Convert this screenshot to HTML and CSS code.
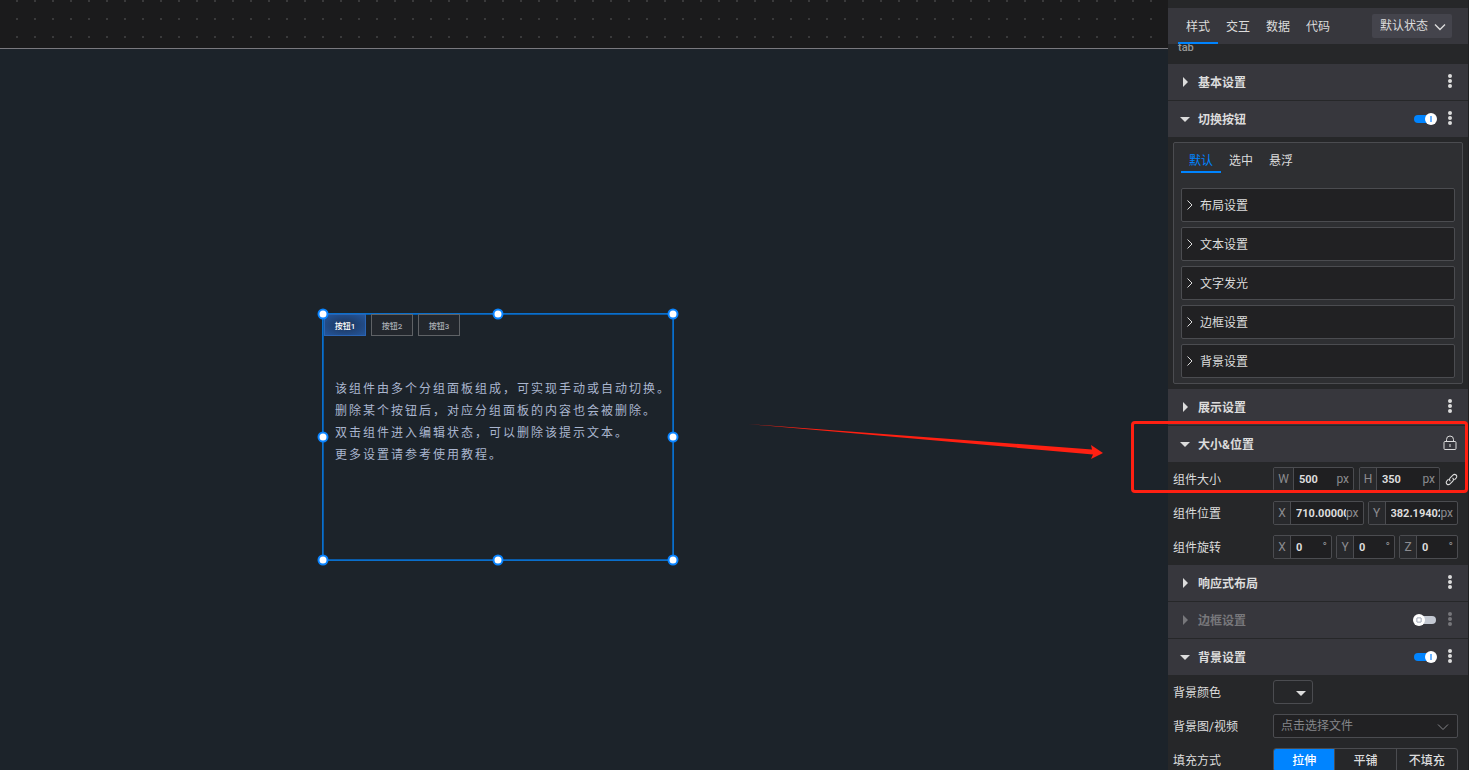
FILE: index.html
```html
<!DOCTYPE html>
<html lang="zh-CN">
<head>
  <meta charset="UTF-8">
  <meta name="viewport" content="width=device-width, initial-scale=1.0">
  <title>编辑器</title>
  <link rel="stylesheet" href="styles.css">
</head>
<body>

  <div class="editor">
    <!-- Canvas -->
    <main class="workspace">
      <div class="grid-strip"></div>
      <div class="canvas"></div>

      <div class="widget">
        <div class="widget-tabs">
          <button class="widget-tab active">按钮1</button>
          <button class="widget-tab">按钮2</button>
          <button class="widget-tab">按钮3</button>
        </div>
        <p class="widget-text">该组件由多个分组面板组成，可实现手动或自动切换。<br>删除某个按钮后，对应分组面板的内容也会被删除。<br>双击组件进入编辑状态，可以删除该提示文本。<br>更多设置请参考使用教程。</p>
        <i class="handle top left"></i>
        <i class="handle top center"></i>
        <i class="handle top right"></i>
        <i class="handle middle left"></i>
        <i class="handle middle right"></i>
        <i class="handle bottom left"></i>
        <i class="handle bottom center"></i>
        <i class="handle bottom right"></i>
      </div>

      <svg class="arrow" width="356" height="38" viewBox="0 0 356 38">
        <path d="M0 1 L344 26.500 L343 22 L355 30 L343 36 L345 31.500 Z" fill="#ff2012"/>
      </svg>
    </main>

    <!-- Settings panel -->
    <aside class="panel">
      <header class="panel-header">
        <nav class="tabs">
          <button class="tab active">样式</button>
          <button class="tab">交互</button>
          <button class="tab">数据</button>
          <button class="tab">代码</button>
        </nav>
        <div class="state-box">
          <select class="state-select" aria-label="状态">
            <option>默认状态</option>
          </select>
          <svg class="chevron" width="12" height="8" viewBox="0 0 12 8"><path d="M1 1.500 6 6.500l5-5" stroke-width="1.400"/></svg>
        </div>
      </header>

      <div class="panel-body">
        <div class="component-name">tab</div>

        <section class="section">
          <h3 class="section-title"><i class="caret"></i>基本设置<span class="actions"><button class="more" aria-label="更多"><i></i><i></i><i></i></button></span></h3>
        </section>

        <section class="section">
          <h3 class="section-title"><i class="caret open"></i>切换按钮<span class="actions"><input class="switch" type="checkbox" aria-label="切换按钮" checked><button class="more" aria-label="更多"><i></i><i></i><i></i></button></span></h3>
          <div class="card">
            <div class="tabs card-tabs">
              <button class="tab active">默认</button>
              <button class="tab">选中</button>
              <button class="tab">悬浮</button>
            </div>
            <div class="fold-list">
              <button class="fold"><svg width="6" height="10" viewBox="0 0 6 10"><path d="M.5.500 5 5 .5 9.500"/></svg>布局设置</button>
              <button class="fold"><svg width="6" height="10" viewBox="0 0 6 10"><path d="M.5.500 5 5 .5 9.500"/></svg>文本设置</button>
              <button class="fold"><svg width="6" height="10" viewBox="0 0 6 10"><path d="M.5.500 5 5 .5 9.500"/></svg>文字发光</button>
              <button class="fold"><svg width="6" height="10" viewBox="0 0 6 10"><path d="M.5.500 5 5 .5 9.500"/></svg>边框设置</button>
              <button class="fold"><svg width="6" height="10" viewBox="0 0 6 10"><path d="M.5.500 5 5 .5 9.500"/></svg>背景设置</button>
            </div>
          </div>
        </section>

        <section class="section">
          <h3 class="section-title"><i class="caret"></i>展示设置<span class="actions"><button class="more" aria-label="更多"><i></i><i></i><i></i></button></span></h3>
        </section>

        <section class="section marked">
          <h3 class="section-title"><i class="caret open"></i>大小&amp;位置<span class="actions">
            <button class="icon-button" aria-label="锁定"><svg width="14" height="16" viewBox="0 0 14 16"><rect x="1" y="6.500" width="12" height="8" rx="1"/><path d="M3.500 6.500V4.500a3.500 3.500 0 0 1 7 0v2M7 9v3"/></svg></button></span></h3>
          <div class="row">
            <span class="row-label">组件大小</span>
            <div class="fields size-fields">
              <label class="field"><span class="prefix wide">W</span><input type="text" value="500"><span class="unit">px</span></label>
              <label class="field"><span class="prefix">H</span><input type="text" value="350"><span class="unit">px</span></label>
              <button class="icon-button" aria-label="锁定比例"><svg width="13" height="13" viewBox="0 0 12 12"><path d="M5 7.500C3.800 6.500 4 5.300 4.800 4.500L7.300 2C9.300 0 12.200 2.700 10.200 4.800L8.700 6.300M7 4.500c1.200 1 1 2.200.2 3L4.700 10C2.700 12-.2 9.300 1.800 7.200L3.300 5.700"/></svg></button>
            </div>
          </div>
          <div class="row">
            <span class="row-label">组件位置</span>
            <div class="fields">
              <label class="field"><span class="prefix">X</span><input type="text" value="710.0000000"><span class="unit">px</span></label>
              <label class="field"><span class="prefix">Y</span><input type="text" value="382.1940298"><span class="unit">px</span></label>
            </div>
          </div>
          <div class="row">
            <span class="row-label">组件旋转</span>
            <div class="fields">
              <label class="field"><span class="prefix">X</span><input type="text" value="0"><span class="unit">°</span></label>
              <label class="field"><span class="prefix">Y</span><input type="text" value="0"><span class="unit">°</span></label>
              <label class="field"><span class="prefix">Z</span><input type="text" value="0"><span class="unit">°</span></label>
            </div>
          </div>
        </section>

        <section class="section">
          <h3 class="section-title"><i class="caret"></i>响应式布局<span class="actions"><button class="more" aria-label="更多"><i></i><i></i><i></i></button></span></h3>
        </section>

        <section class="section">
          <h3 class="section-title off"><i class="caret"></i>边框设置<span class="actions"><input class="switch" type="checkbox" aria-label="边框设置"><button class="more" aria-label="更多"><i></i><i></i><i></i></button></span></h3>
        </section>

        <section class="section">
          <h3 class="section-title"><i class="caret open"></i>背景设置<span class="actions"><input class="switch" type="checkbox" aria-label="背景设置" checked><button class="more" aria-label="更多"><i></i><i></i><i></i></button></span></h3>
          <div class="row">
            <span class="row-label">背景颜色</span>
            <button class="color-picker" aria-label="背景颜色"><i class="caret open"></i></button>
          </div>
          <div class="row">
            <label class="row-label" for="file">背景图/视频</label>
            <div class="file-box">
              <select id="file" class="file-select">
                <option>点击选择文件</option>
              </select>
              <svg class="chevron" width="12" height="8" viewBox="0 0 12 8"><path d="M1 1.500 6 6.500l5-5"/></svg>
            </div>
          </div>
          <div class="row">
            <span class="row-label">填充方式</span>
            <div class="segments">
              <button class="segment active">拉伸</button>
              <button class="segment">平铺</button>
              <button class="segment">不填充</button>
            </div>
          </div>
        </section>
      </div>
    </aside>
  </div>

</body>
</html>
```
FILE: styles.css
```css
*,
*::before,
*::after {
  box-sizing: border-box;
}
body {
  margin: 0;
  font-family: Roboto, "Noto Sans CJK SC", sans-serif;
  font-size: 12px;
  color: #dcdcdc;
  background-color: #262729;
}
button,
input,
select {
  margin: 0;
  padding: 0;
  border: 0;
  background: none;
  color: inherit;
  font: inherit;
  cursor: pointer;
}
svg {
  display: block;
  fill: none;
  stroke: currentColor;
}
.editor {
  display: flex;
  height: 100vh;
  overflow: hidden;
}

/* canvas */
.workspace {
  position: relative;
  flex: 1;
  display: flex;
  flex-direction: column;
  overflow: hidden;
}
.grid-strip {
  height: 48px;
  background: conic-gradient(from 90deg at 16px 16px, #3a3a3b 90deg, #1b1b1c 0) 0 2px / 18px 18px;
}
.canvas {
  flex: 1;
  border-top: 1px solid #7a797e;
  background-color: #1c232a;
}
.widget {
  position: absolute;
  left: 323px;
  top: 314px;
  width: 350px;
  height: 246px;
  box-shadow: 0 0 0 1px #0a6fcc, inset 0 0 0 1px #0a5aa6;
}
.widget-tabs {
  padding-left: 1px;
  display: flex;
  gap: 5px;
}
.widget-tab {
  width: 42px;
  height: 22px;
  border: 1px solid #5f6266;
  font-size: 8px;
  font-weight: 500;
  color: #a9adb3;
  background-color: #23272d;
}
.widget-tab.active {
  border-color: #2a64b4;
  color: #fff;
  background: radial-gradient(#1d3356, #24569c);
}
.widget-text {
  margin: 42px 0 0 12px;
  font-size: 12px;
  line-height: 22px;
  letter-spacing: 2px;
  white-space: nowrap;
  color: #aab6cf;
}
.handle {
  position: absolute;
  width: 11px;
  height: 11px;
  border: 2px solid #0a84ff;
  border-radius: 50%;
  background-color: #fff;
  transform: translate(-50%, -50%);
}
.handle.top {
  top: 0;
}
.handle.middle {
  top: 50%;
}
.handle.bottom {
  top: 100%;
}
.handle.left {
  left: 0;
}
.handle.center {
  left: 50%;
}
.handle.right {
  left: 100%;
}
.arrow {
  position: absolute;
  left: 748px;
  top: 423px;
  stroke: none;
}

/* settings panel */
.panel {
  width: 301px;
  padding-top: 8px;
  border-right: 1px solid #1f2022;
  display: flex;
  flex-direction: column;
  z-index: 1;
}
.panel-header {
  flex: none;
  height: 36px;
  padding: 0 16px 0 10px;
  display: flex;
  align-items: center;
  justify-content: space-between;
  background-color: #37373d;
}
.tabs {
  display: flex;
  align-self: stretch;
}
.tab {
  width: 40px;
  border-bottom: 2px solid transparent;
}
.tab.active {
  border-color: #0084ff;
}
.state-box {
  position: relative;
  width: 80px;
}
.state-select {
  width: 100%;
  height: 24px;
  padding-left: 8px;
  border-radius: 2px;
  appearance: none;
  background-color: #44444c;
}
.chevron {
  position: absolute;
  right: 6px;
  top: 9px;
  pointer-events: none;
}
.component-name {
  height: 20px;
  padding-left: 10px;
  line-height: 8px;
  font-size: 11px;
  font-weight: 500;
  color: #999;
}
.panel-body {
  flex: 1;
  min-height: 0;
  overflow-y: clip;
}
.section + .section {
  margin-top: 1px;
}
.section-title {
  height: 36px;
  margin: 0;
  padding: 0 10px 2px;
  display: flex;
  align-items: center;
  font-size: 12px;
  font-weight: 700;
  background-color: #37373d;
}
.section-title.off {
  color: #77777b;
}
.caret {
  width: 10px;
  height: 10px;
  margin: 2px 8px 0 2px;
  background-color: currentColor;
  clip-path: polygon(30% 0, 80% 50%, 30% 100%);
}
.caret.open {
  clip-path: polygon(0 30%, 100% 30%, 50% 80%);
}
.actions {
  margin-left: auto;
  display: flex;
  align-items: center;
  gap: 6px;
}
.more {
  width: 16px;
  height: 24px;
  display: flex;
  flex-direction: column;
  align-items: center;
  justify-content: center;
  gap: 1px;
}
.more i {
  width: 4px;
  height: 4px;
  border-radius: 50%;
  background-color: currentColor;
}
.switch {
  position: relative;
  width: 22px;
  height: 8px;
  margin-top: 2px;
  border-radius: 4px;
  appearance: none;
  background-color: #c3c8d2;
}
.switch::before {
  content: "";
  position: absolute;
  left: -1px;
  top: -2px;
  width: 12px;
  height: 12px;
  border-radius: 50%;
  background: radial-gradient(#fff 1px, #c3c8d2 2px, #c3c8d2 3px, #fff 3px);
}
.switch:checked {
  background-color: #0084ff;
}
.switch:checked::before {
  left: 11px;
  background: linear-gradient(#6db4ff, #6db4ff) center / 2px 6px no-repeat #fff;
}
.icon-button {
  display: flex;
}
.section-title .icon-button {
  padding: 0 1px;
}

.card {
  margin: 5px;
  padding: 0 7px 5px;
  border: 1px solid #4b4c50;
  border-radius: 2px;
  background-color: #2e2f32;
}
.card-tabs {
  height: 30px;
  margin-bottom: 15px;
}
.card-tabs .tab {
  padding-top: 4px;
}
.card-tabs .active {
  color: #0084ff;
}
.fold-list {
  display: flex;
  flex-direction: column;
  gap: 5px;
}
.fold {
  height: 34px;
  padding: 0 5px 2px;
  border: 1px solid #4b4c50;
  border-radius: 2px;
  display: flex;
  align-items: center;
  gap: 7px;
  background-color: #212123;
}
.fold svg {
  margin-top: 2px;
}

.row {
  height: 34px;
  padding: 0 10px 0 5px;
  display: flex;
  align-items: center;
}
.row-label {
  flex: none;
  width: 100px;
  padding-bottom: 2px;
}
.fields {
  flex: 1;
  display: flex;
  align-items: center;
  gap: 4px;
}
.size-fields {
  gap: 5px;
}
.field {
  flex: 1;
  min-width: 0;
  height: 24px;
  padding-right: 4px;
  border: 1px solid #4b4c50;
  border-radius: 2px;
  display: flex;
  align-items: center;
  background-color: #1f1f21;
}
.prefix {
  flex: none;
  width: 17px;
  align-self: stretch;
  border-right: 1px solid #4b4c50;
  line-height: 22px;
  text-align: center;
  color: #8c8c90;
  background-color: #28292c;
}
.prefix.wide {
  width: 20px;
}
.field input {
  flex: 1;
  width: 0;
  min-width: 0;
  padding-left: 5px;
  font-size: 11px;
  font-weight: 700;
  outline: none;
}
.unit {
  color: #8c8c90;
}

/* annotated rows */
.marked {
  position: relative;
}
.marked::after {
  content: "";
  position: absolute;
  left: -37px;
  right: 0;
  top: -5px;
  height: 72px;
  border: 3px solid #ff2012;
  border-radius: 4px;
  pointer-events: none;
}

.color-picker {
  width: 40px;
  height: 24px;
  border: 1px solid #4b4c50;
  border-radius: 3px;
  display: flex;
  align-items: center;
  justify-content: flex-end;
}
.color-picker .caret {
  margin-right: 6px;
}
.file-box {
  position: relative;
  flex: 1;
  color: #85868a;
}
.file-select {
  width: 100%;
  height: 24px;
  padding-left: 7px;
  border: 1px solid #4b4c50;
  border-radius: 2px;
  appearance: none;
  background-color: #212123;
}
.file-box .chevron {
  right: 9px;
}
.segments {
  flex: 1;
  height: 24px;
  border: 1px solid #4b4c50;
  border-radius: 3px;
  display: flex;
  overflow: hidden;
}
.segment {
  flex: 1;
  padding-bottom: 2px;
  font-weight: 500;
}
.segment + .segment {
  border-left: 1px solid #4b4c50;
}
.segment.active {
  color: #fff;
  background-color: #0084ff;
}
```
